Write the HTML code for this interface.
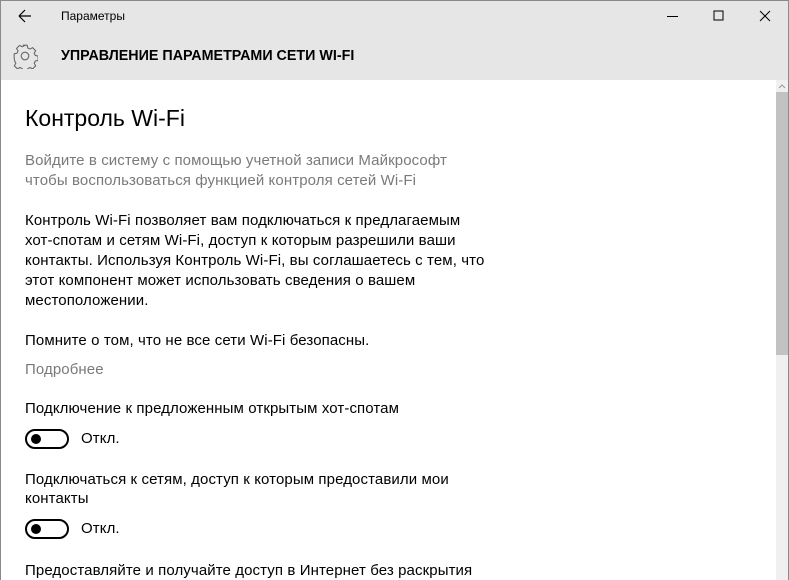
<!DOCTYPE html>
<html><head><meta charset="utf-8"><style>
*{margin:0;padding:0;box-sizing:border-box}
body{width:789px;height:580px;overflow:hidden;background:#fff;font-family:"Segoe UI","Liberation Sans",sans-serif;color:#000;position:relative}
.frame{position:absolute;inset:0;border:1px solid #8a8a8a;border-bottom:none}
.hdr{position:absolute;left:1px;top:1px;right:1px;height:79px;background:#e6e6e6}
.t{position:absolute;white-space:nowrap;font-size:15px;letter-spacing:0.1px}
.g{color:#7a7a7a}
.tog{position:absolute;left:25px;width:44px;height:20px;border:2px solid #000;border-radius:10px}
.tog::after{content:"";position:absolute;left:4px;top:3px;width:10px;height:10px;border-radius:50%;background:#000}
</style></head><body>
<div class="hdr"></div>
<div class="frame"></div>
<svg style="position:absolute;left:18px;top:9px" width="14" height="14"><path d="M1 7H13M1 7L7 1M1 7L7 13" stroke="#000" stroke-width="1.2" fill="none"/></svg>
<div class="t" style="left:61px;top:9px;font-size:12px;letter-spacing:0">Параметры</div>
<svg style="position:absolute;left:667px;top:16px" width="12" height="2"><rect width="11" height="1" fill="#000"/></svg>
<svg style="position:absolute;left:713px;top:10px" width="12" height="12"><rect x="1" y="1" width="9" height="9" stroke="#000" fill="none"/></svg>
<svg style="position:absolute;left:759px;top:10px" width="12" height="12"><path d="M1 1L11 11M11 1L1 11" stroke="#000" fill="none"/></svg>
<svg style="position:absolute;left:12px;top:43px" width="26" height="26" viewBox="0 0 24 24"><path d="M10 2h4l.6 2.6 2 1 2.4-1.3 2.8 2.8-1.3 2.4 1 2 2.6.6v4l-2.6.6-1 2 1.3 2.4-2.8 2.8-2.4-1.3-2 1-.6 2.6h-4l-.6-2.6-2-1-2.4 1.3-2.8-2.8 1.3-2.4-1-2L2 14v-4l2.6-.6 1-2L4.2 5l2.8-2.8 2.4 1.3 2-1z" stroke="#666" fill="none" stroke-width="1"/><circle cx="12" cy="12" r="3.5" stroke="#666" fill="none"/></svg>
<div class="t" style="left:61px;top:48px;font-size:14.3px;font-weight:600;letter-spacing:0">УПРАВЛЕНИЕ ПАРАМЕТРАМИ СЕТИ WI-FI</div>
<div style="position:absolute;left:776px;top:80px;width:12px;height:500px;background:#f0f0f0"></div>
<div style="position:absolute;left:776px;top:92px;width:12px;height:263px;background:#c2c2c2"></div>
<svg style="position:absolute;left:777px;top:83px" width="10" height="6"><path d="M2 5L5 2L8 5" stroke="#999" fill="none"/></svg>
<div class="t" style="left:25px;top:105px;font-size:23px;letter-spacing:0">Контроль Wi-Fi</div>
<div class="t g" style="left:25px;top:152px">Войдите в систему с помощью учетной записи Майкрософт</div>
<div class="t g" style="left:25px;top:172px">чтобы воспользоваться функцией контроля сетей Wi-Fi</div>
<div class="t" style="left:25px;top:212px">Контроль Wi-Fi позволяет вам подключаться к предлагаемым</div>
<div class="t" style="left:25px;top:232px">хот-спотам и сетям Wi-Fi, доступ к которым разрешили ваши</div>
<div class="t" style="left:25px;top:252px">контакты. Используя Контроль Wi-Fi, вы соглашаетесь с тем, что</div>
<div class="t" style="left:25px;top:272px">этот компонент может использовать сведения о вашем</div>
<div class="t" style="left:25px;top:292px">местоположении.</div>
<div class="t" style="left:25px;top:332px">Помните о том, что не все сети Wi-Fi безопасны.</div>
<div class="t g" style="left:25px;top:361px">Подробнее</div>
<div class="t" style="left:25px;top:400px">Подключение к предложенным открытым хот-спотам</div>
<div class="tog" style="top:429px"></div>
<div class="t" style="left:81px;top:430px">Откл.</div>
<div class="t" style="left:25px;top:471px">Подключаться к сетям, доступ к которым предоставили мои</div>
<div class="t" style="left:25px;top:490px">контакты</div>
<div class="tog" style="top:519px"></div>
<div class="t" style="left:81px;top:520px">Откл.</div>
<div class="t" style="left:25px;top:562px">Предоставляйте и получайте доступ в Интернет без раскрытия</div>
</body></html>
